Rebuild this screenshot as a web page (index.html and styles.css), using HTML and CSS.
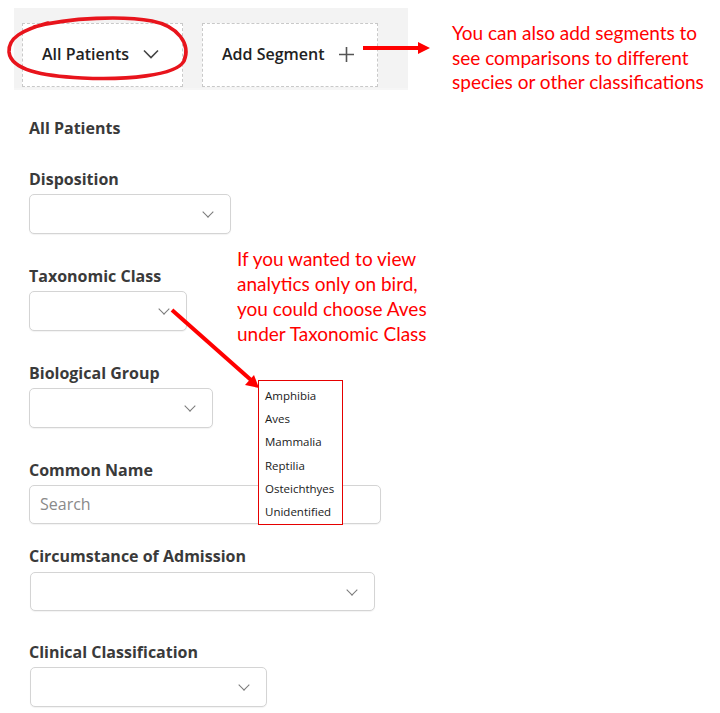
FILE: index.html
```html
<!DOCTYPE html>
<html>
<head>
<meta charset="utf-8">
<link rel="stylesheet" href="styles.css">
</head>
<body>
<div class="page">
  <div class="segbar">
    <div class="seg">
      <span>All Patients</span>
      <svg class="seg-icon" width="16" height="10" viewBox="0 0 16 10"><path d="M1 1.5 L8 8.5 L15 1.5" fill="none" stroke="#444" stroke-width="1.6"/></svg>
    </div>
    <div class="seg seg-add">
      <span>Add Segment</span>
      <svg class="seg-icon" width="17" height="17" viewBox="0 0 17 17"><path d="M8.5 1 V16 M1 8.5 H16" fill="none" stroke="#555" stroke-width="1.6"/></svg>
    </div>
  </div>

  <div class="form">
    <div class="heading">All Patients</div>

    <div class="field">
      <div class="label">Disposition</div>
      <div class="select w-disp"><span class="chev"></span></div>
    </div>
    <div class="field">
      <div class="label">Taxonomic Class</div>
      <div class="select w-tax"><span class="chev"></span></div>
    </div>
    <div class="field">
      <div class="label">Biological Group</div>
      <div class="select w-bio"><span class="chev"></span></div>
    </div>
    <div class="field field-short">
      <div class="label">Common Name</div>
      <div class="input w-common">Search</div>
    </div>
    <div class="field field-tight">
      <div class="label">Circumstance of Admission</div>
      <div class="select w-circ"><span class="chev"></span></div>
    </div>
    <div class="field">
      <div class="label">Clinical Classification</div>
      <div class="select w-clin"><span class="chev"></span></div>
    </div>
  </div>

  <ul class="menu">
    <li>Amphibia</li>
    <li>Aves</li>
    <li>Mammalia</li>
    <li>Reptilia</li>
    <li>Osteichthyes</li>
    <li>Unidentified</li>
  </ul>

  <svg class="overlay" width="720" height="713" viewBox="0 0 720 713">
    <path d="M34 27 C70 17 125 16 152 21 C178 26 191 44 184 61 C176 76 125 80 82 78 C42 76 11 70 9 52 C8 38 22 30 48 23" fill="none" stroke="#e8141c" stroke-width="3.6" stroke-linecap="round"/>
    <line x1="363" y1="48" x2="419" y2="48" stroke="#f00" stroke-width="4"/>
    <polygon points="418,42 430,48 418,54" fill="#f00"/>
    <line x1="172" y1="310" x2="251" y2="380" stroke="#f00" stroke-width="4"/>
    <polygon points="245,385 259,388 254,375" fill="#f00"/>
  </svg>

  <div class="note note-seg">You can also add segments to<br>see comparisons to different<br>species or other classifications</div>
  <div class="note note-tax">If you wanted to view<br>analytics only on bird,<br>you could choose Aves<br>under Taxonomic Class</div>
</div>
</body>
</html>
```

FILE: styles.css
```css
html, body {
  margin: 0;
  padding: 0;
  background: #fff;
}
.page {
  position: relative;
  width: 720px;
  height: 713px;
  overflow: hidden;
  font-family: "Open Sans", "Liberation Sans", sans-serif;
}
.segbar {
  margin: 8px 0 0 14px;
  width: 394px;
  height: 82px;
  box-sizing: border-box;
  background: #f3f3f3;
  padding: 15px 0 0 8px;
  display: flex;
  gap: 19px;
  align-items: flex-start;
  border-bottom: 2px solid #f6f6f6;
}
.seg {
  width: 161px;
  height: 64px;
  box-sizing: border-box;
  background: #fff;
  border: 1px dashed #c9c9c9;
  display: flex;
  align-items: center;
  padding-left: 19px;
  gap: 14px;
  font-size: 16px;
  font-weight: 600;
  color: #222;
  padding-bottom: 2px;
}
.seg-add {
  width: 176px;
  gap: 13px;
}
.seg-icon {
  display: block;
}
.form {
  padding: 28px 0 0 29px;
  display: flex;
  flex-direction: column;
}
.heading, .label {
  font-size: 16px;
  font-weight: 700;
  color: #3a3a3a;
  line-height: 20px;
  height: 20px;
}
.heading {
  margin-bottom: 31px;
}
.field {
  display: flex;
  flex-direction: column;
  align-items: flex-start;
  gap: 5px;
  margin-bottom: 32px;
}
.field-short {
  margin-bottom: 22px;
  gap: 5px;
}
.field-tight {
  gap: 6px;
  margin-bottom: 31px;
}
.select, .input {
  height: 40px;
  box-sizing: border-box;
  border: 1px solid #d4d4d4;
  border-radius: 5px;
  box-shadow: 0 1px 1px rgba(0,0,0,0.05);
  position: relative;
  background: #fff;
}
.field-short .input, .field-tight .select {
  height: 39px;
}
.input {
  font-size: 16px;
  color: #8a8a8a;
  padding-left: 10px;
  line-height: 37px;
}
.chev {
  position: absolute;
  right: 18px;
  top: 13px;
  width: 7px;
  height: 7px;
  border-right: 1.6px solid #7a7a7a;
  border-bottom: 1.6px solid #7a7a7a;
  transform: rotate(45deg);
}
.w-disp { width: 202px; }
.w-tax { width: 158px; }
.w-bio { width: 184px; }
.w-common { width: 352px; }
.w-circ { width: 345px; margin-left: 1px; }
.w-clin { width: 237px; margin-left: 1px; }
.menu {
  position: absolute;
  left: 258px;
  top: 380px;
  width: 85px;
  height: 145px;
  box-sizing: border-box;
  margin: 0;
  padding: 3px 0 0 6px;
  list-style: none;
  border: 1px solid #e60000;
  background: #fff;
  font-size: 11.5px;
  color: #1a1a1a;
}
.menu li {
  height: 23.2px;
  line-height: 23px;
}
.overlay {
  position: absolute;
  left: 0;
  top: 0;
  pointer-events: none;
}
.note {
  position: absolute;
  font-family: Lato, "Liberation Sans", sans-serif;
  font-size: 19px;
  color: #f00;
  white-space: nowrap;
}
.note-seg {
  left: 452px;
  top: 21px;
  line-height: 24.5px;
}
.note-tax {
  left: 237px;
  top: 246px;
  line-height: 25px;
}
```
